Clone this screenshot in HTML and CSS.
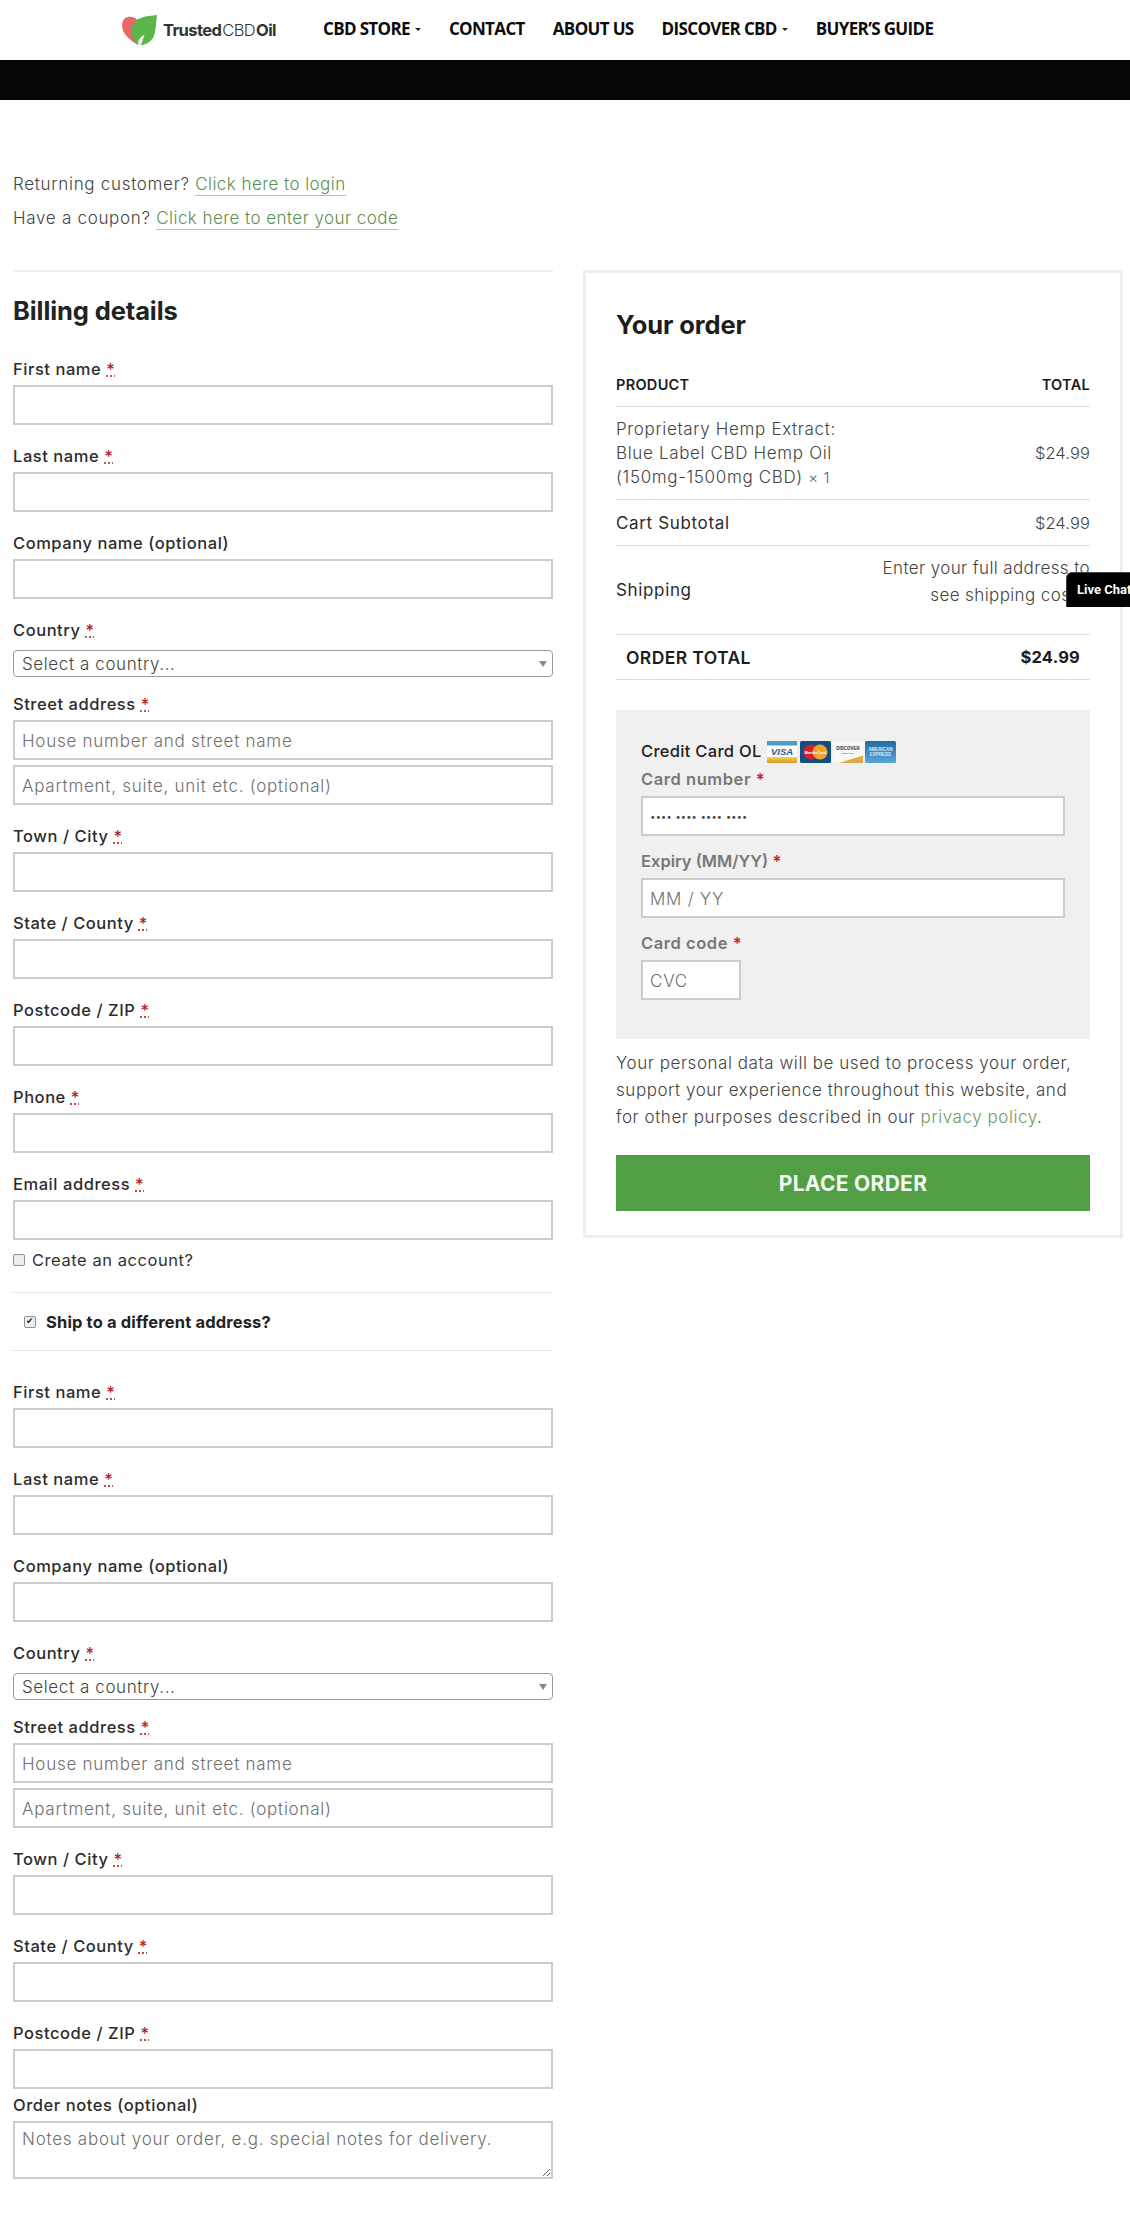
FILE: index.html
```html
<!DOCTYPE html>
<html lang="en">
<head>
<meta charset="utf-8">
<title>Checkout</title>
<link rel="stylesheet" href="styles.css">
</head>
<body>
<header class="site-header">
  <a class="logo" href="#">
    <svg class="logo-mark" width="35" height="30" viewBox="0 0 35 30">
      <path d="M15 4.500C11 .5 0 0 0 10.500 0 18 7 25 16 30L19 10Z" fill="#e8686a"/>
      <path d="M35 0C24 1 13 2 10 12c-2 7 1 14 7 18 5 .5 12-2 15-9 2-6 2-14 3-21Z" fill="#5cb54b"/>
      <path d="M16.500 30c-1-4 1-8 6-10-1.500 3-2 7-3.500 9.500Z" fill="#f4f8f0"/>
    </svg>
    <span class="logo-text"><b>Trusted</b><span class="logo-thin">CBD</span><b>Oil</b></span>
  </a>
  <nav class="nav">
    <a href="#">CBD STORE<i class="caret"></i></a>
    <a href="#">CONTACT</a>
    <a href="#">ABOUT US</a>
    <a href="#">DISCOVER CBD<i class="caret"></i></a>
    <a href="#">BUYER’S GUIDE</a>
  </nav>
</header>
<div class="black-band"></div>

<main class="page">
  <div class="notices">
    <p>Returning customer? <a href="#">Click here to login</a></p>
    <p>Have a coupon? <a href="#">Click here to enter your code</a></p>
  </div>

  <div class="columns">
    <section class="col-left">
      <h2 class="billing-title">Billing details</h2>

      <div class="field"><label>First name <abbr>*</abbr></label><input class="text"></div>
      <div class="field"><label>Last name <abbr>*</abbr></label><input class="text"></div>
      <div class="field"><label>Company name (optional)</label><input class="text"></div>
      <div class="field field-select"><label>Country <abbr>*</abbr></label>
        <div class="select-wrap"><select class="select"><option>Select a country...</option></select></div></div>
      <div class="field"><label>Street address <abbr>*</abbr></label>
        <input class="text" placeholder="House number and street name">
        <input class="text second" placeholder="Apartment, suite, unit etc. (optional)"></div>
      <div class="field"><label>Town / City <abbr>*</abbr></label><input class="text"></div>
      <div class="field"><label>State / County <abbr>*</abbr></label><input class="text"></div>
      <div class="field"><label>Postcode / ZIP <abbr>*</abbr></label><input class="text"></div>
      <div class="field"><label>Phone <abbr>*</abbr></label><input class="text"></div>
      <div class="field field-last"><label>Email address <abbr>*</abbr></label><input class="text"></div>

      <label class="check-row"><input type="checkbox" class="check"> Create an account?</label>

      <div class="ship-row"><label class="ship-label"><input type="checkbox" class="check" checked> Ship to a different address?</label></div>

      <div class="field"><label>First name <abbr>*</abbr></label><input class="text"></div>
      <div class="field"><label>Last name <abbr>*</abbr></label><input class="text"></div>
      <div class="field"><label>Company name (optional)</label><input class="text"></div>
      <div class="field field-select"><label>Country <abbr>*</abbr></label>
        <div class="select-wrap"><select class="select"><option>Select a country...</option></select></div></div>
      <div class="field"><label>Street address <abbr>*</abbr></label>
        <input class="text" placeholder="House number and street name">
        <input class="text second" placeholder="Apartment, suite, unit etc. (optional)"></div>
      <div class="field"><label>Town / City <abbr>*</abbr></label><input class="text"></div>
      <div class="field"><label>State / County <abbr>*</abbr></label><input class="text"></div>
      <div class="field field-tight"><label>Postcode / ZIP <abbr>*</abbr></label><input class="text"></div>
      <div class="field"><label>Order notes (optional)</label>
        <textarea class="notes" placeholder="Notes about your order, e.g. special notes for delivery."></textarea></div>
    </section>

    <aside class="order-box">
      <h3 class="order-title">Your order</h3>
      <div class="order-row row-head"><span>PRODUCT</span><span>TOTAL</span></div>
      <div class="order-row row-product">
        <span class="product-name">Proprietary Hemp Extract:<br>Blue Label CBD Hemp Oil<br>(150mg-1500mg CBD) <small class="qty">× 1</small></span>
        <span class="price">$24.99</span>
      </div>
      <div class="order-row row-subtotal"><span class="row-key">Cart Subtotal</span><span class="price">$24.99</span></div>
      <div class="order-row row-shipping"><span class="row-key">Shipping</span><span class="ship-note">Enter your full address to<br>see shipping costs.</span></div>
      <div class="order-row row-total"><span>ORDER TOTAL</span><b>$24.99</b></div>

      <div class="payment">
        <div class="pay-head">
          <span class="pay-name">Credit Card OL</span>
          <svg class="card-icons" width="130" height="22" viewBox="0 0 130 22">
            <defs>
              <linearGradient id="amex" x1="0" y1="0" x2="0" y2="1"><stop offset="0" stop-color="#1f6ca6"/><stop offset="1" stop-color="#5aa6d8"/></linearGradient>
              <linearGradient id="gold" x1="0" y1="0" x2="0" y2="1"><stop offset="0" stop-color="#f3d24a"/><stop offset="1" stop-color="#d9962a"/></linearGradient>
            </defs>
            <rect x="0" y="0" width="30" height="22" fill="#fdfdfd"/>
            <rect x="0" y="0" width="30" height="4.500" fill="#4a9cc4"/>
            <rect x="0" y="16" width="30" height="6" fill="url(#gold)"/>
            <text x="15" y="14" class="t-visa" text-anchor="middle">VISA</text>
            <rect x="33" y="0" width="31" height="22" rx="1.500" fill="#124f80"/>
            <circle cx="44" cy="11" r="7.500" fill="#d6212e"/>
            <circle cx="53" cy="11" r="7.500" fill="#eda52d"/>
            <text x="48.500" y="12.500" class="t-mc" text-anchor="middle">MasterCard</text>
            <rect x="66" y="0" width="30" height="22" fill="#f7f7f5"/>
            <path d="M72 22 96 14.500V22Z" fill="#e2a94a"/>
            <text x="81" y="9" class="t-disc" text-anchor="middle">DISCOVER</text>
            <text x="81" y="12.500" class="t-net" text-anchor="middle">NETWORK</text>
            <rect x="98" y="0" width="31" height="22" rx="1.500" fill="url(#amex)"/>
            <text x="113.500" y="9.500" class="t-amex" text-anchor="middle">AMERICAN</text>
            <text x="113.500" y="15" class="t-amex" text-anchor="middle">EXPRESS</text>
          </svg>
        </div>
        <div class="pay-field"><label>Card number <span class="star">*</span></label><input class="text dots" placeholder="···· ···· ···· ····"></div>
        <div class="pay-field"><label class="label-narrow">Expiry (MM/YY) <span class="star">*</span></label><input class="text" placeholder="MM / YY"></div>
        <div class="pay-field"><label>Card code <span class="star">*</span></label><input class="text cvc" placeholder="CVC"></div>
      </div>

      <p class="privacy">Your personal data will be used to process your order, support your experience throughout this website, and for other purposes described in our <a href="#">privacy policy</a>.</p>
      <button class="place-order" type="button">PLACE ORDER</button>
    </aside>
  </div>
</main>

<a class="live-chat" href="#">Live Chat</a>
</body>
</html>
```
FILE: styles.css
```css
* { box-sizing: border-box; }
html, body { margin: 0; padding: 0; }
body {
  width: 1130px;
  height: 2220px;
  overflow: hidden;
  background: #fff;
  position: relative;
  font-family: "Inter", "Open Sans", sans-serif;
  font-size: 17px;
  font-weight: 300;
  letter-spacing: .5px;
  color: #444;
}
a { text-decoration: none; color: inherit; }
p { margin: 0; }

/* header */
.site-header { height: 60px; display: flex; align-items: center; padding-left: 122px; background: #fff; }
.logo { display: flex; align-items: center; gap: 6px; width: 201px; color: #333; }
.logo-mark { flex: none; }
.logo-text { font-size: 16.5px; letter-spacing: -.6px; }
.logo-text b { font-weight: 700; }
.logo-thin { font-weight: 300; margin: 0 1px; }
.nav { display: flex; gap: 28px; padding-bottom: 3px; }
.nav a {
  font-family: "Open Sans", sans-serif;
  font-weight: 700;
  font-size: 17px;
  letter-spacing: -.65px;
  color: #0c0c0c;
  display: flex;
  align-items: center;
}
.caret { display: inline-block; width: 0; height: 0; margin-left: 5px; margin-top: 2px; border: 3px solid transparent; border-top: 3px solid #222; border-bottom: 0; }
.black-band { height: 40px; background: #070707; }

/* page */
.page { padding: 0 7px 0 13px; }
.notices { padding-top: 67px; line-height: 34px; height: 170px; color: #444; letter-spacing: .7px; }
.notices a { color: #5c8f4f; border-bottom: 1px solid #bbb; padding-bottom: 1px; letter-spacing: .45px; }
.columns { display: flex; justify-content: space-between; align-items: flex-start; }

/* billing */
.col-left { width: 540px; border-top: 2px solid #eee; }
.billing-title { margin: 24px 0 30px; font-size: 25.5px; line-height: 30px; font-weight: 700; color: #222; letter-spacing: -.1px; }
.field { margin-bottom: 18px; }
.field > label { display: block; height: 24px; line-height: 26px; margin-bottom: 5px; font-size: 16.5px; font-weight: 500; color: #2c2c2c; letter-spacing: .55px; }
.field abbr { color: #b3202a; text-decoration: underline dotted; }
.field-select { margin-bottom: 14px; }
.field-select > label { margin-bottom: 9px; }
.field-last { margin-bottom: 8px; }
.field-tight { margin-bottom: 3px; }
.text { display: block; width: 100%; height: 40px; padding: 2px 7px 0; border: 2px solid #ccc; background: #fff; font: inherit; letter-spacing: .75px; color: #444; border-radius: 0; outline: 0; }
.text.second { margin-top: 5px; }
.text::placeholder, .notes::placeholder { color: #707070; opacity: 1; }
.dots::placeholder { color: #444; font-weight: 700; letter-spacing: -.3px; }
.select-wrap { position: relative; height: 27px; }
.select-wrap::after { content: ""; position: absolute; right: 6px; top: 11px; border: 4px solid transparent; border-top: 6px solid #888; border-bottom: 0; }
.select { display: block; width: 100%; height: 27px; padding: 0 8px; border: 1px solid #9a9a9a; border-radius: 4px; background: #fff; appearance: none; font: inherit; letter-spacing: .6px; color: #444; }
.notes { display: block; width: 100%; height: 58px; padding: 6px 7px 4px; border: 2px solid #ccc; font: inherit; letter-spacing: .75px; outline: 0; border-radius: 0; }
.check-row { display: flex; align-items: center; gap: 7px; height: 24px; font-size: 16.5px; font-weight: 400; color: #333; letter-spacing: .55px; }
.check { appearance: none; margin: 0; width: 12px; height: 12px; flex: none; background: #eee; border: 1px solid #8f8f8f; border-radius: 2px; position: relative; }
.check:checked::after { content: "✔"; position: absolute; left: 1px; top: -1px; font: 9px/11px "DejaVu Sans", sans-serif; letter-spacing: 0; color: #222; }
.ship-row { margin: 20px 0 28px; height: 59px; border-top: 1px solid #e4e4e4; border-bottom: 1px solid #e4e4e4; display: flex; align-items: center; padding-left: 11px; }
.ship-label { display: flex; align-items: center; gap: 10px; font-size: 16.5px; font-weight: 700; color: #222; letter-spacing: .15px; }

/* order */
.order-box { width: 540px; height: 968px; border: 3px solid #eee; padding: 31px 30px 0; }
.order-title { margin: 6px 0 28px; font-size: 25.5px; line-height: 30px; font-weight: 700; color: #1c1c1c; letter-spacing: -.1px; }
.order-row { display: flex; justify-content: space-between; align-items: center; border-bottom: 1px solid #ddd; }
.row-head { height: 39px; font-size: 14.5px; font-weight: 600; color: #1c1c1c; padding-bottom: 6px; letter-spacing: .3px; }
.row-product { height: 93px; line-height: 24px; }
.product-name { letter-spacing: .65px; }
.qty { font-size: 15px; color: #3f6a8a; }
.price { font-size: 16.5px; letter-spacing: .1px; }
.row-subtotal { height: 46px; }
.row-key { color: #2a2a2a; font-weight: 400; letter-spacing: .65px; }
.row-shipping { height: 89px; }
.ship-note { text-align: right; line-height: 27px; padding-bottom: 16px; letter-spacing: .39px; }
.row-total { height: 45px; padding: 0 10px; font-size: 17.5px; font-weight: 600; color: #1c1c1c; letter-spacing: .4px; }
.row-total b { font-size: 16.5px; font-weight: 700; letter-spacing: .2px; }
.payment { margin-top: 30px; height: 329px; background: #f0f0f0; padding: 26px 25px 0; }
.pay-head { display: flex; align-items: center; gap: 5px; height: 32px; color: #222; font-weight: 500; font-size: 16.5px; letter-spacing: .3px; }
.pay-name { padding-bottom: 3px; }
.card-icons { flex: none; }
.pay-field > label { display: block; height: 24px; line-height: 22px; margin: 0 0 4px; font-size: 16.5px; font-weight: 600; color: #777; letter-spacing: .55px; }
.pay-field > .label-narrow { letter-spacing: 0; }
.pay-field { margin-bottom: 14px; }
.star { color: #c8202a; }
.cvc { width: 100px; }
.t-visa { font: italic 700 9.500px "Liberation Sans", sans-serif; fill: #1f5c9c; letter-spacing: 0; }
.t-mc { font: 700 4px "Liberation Sans", sans-serif; fill: #fff; letter-spacing: 0; }
.t-disc { font: 700 4.500px "Liberation Sans", sans-serif; fill: #333; letter-spacing: 0; }
.t-net { font: 400 2.500px "Liberation Sans", sans-serif; fill: #555; letter-spacing: 0; }
.t-amex { font: 700 4.500px "Liberation Sans", sans-serif; fill: #d8eefa; letter-spacing: 0; }
.privacy { margin-top: 11px; line-height: 27px; color: #444; letter-spacing: .55px; }
.privacy a { color: #6f9a62; }
.place-order { display: block; width: 100%; height: 56px; margin-top: 24px; border: 0; background: #529e44; color: #f4fbf2; font: 700 21px "Inter", sans-serif; letter-spacing: .3px; }

/* overlay */
.live-chat {
  position: absolute; right: 0; top: 572px; width: 64px; height: 35px;
  background: #000; color: #fff; border: 1px solid #444; border-right: 0; border-bottom: 0; border-top-left-radius: 6px;
  font: 700 13px "Roboto", sans-serif; letter-spacing: 0; line-height: 34px; padding-left: 10px; white-space: nowrap; overflow: hidden;
}
```
